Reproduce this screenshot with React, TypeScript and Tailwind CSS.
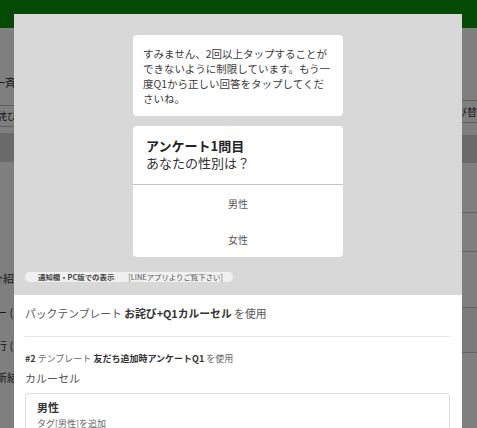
import React from "react";

const bubbleLines = [
  "すみません、2回以上タップすることが",
  "できないように制限しています。もう一",
  "度Q1から正しい回答をタップしてくだ",
  "さいね。",
];

const Background = () => (
  <div className="flex flex-col h-full bg-white text-[#333]">
    <div className="h-[28px] bg-[#0a940a]" />
    <div className="flex flex-1">
      <div className="w-[240px] flex flex-col">
        <div className="mt-[47px] h-[15px] text-[11px] leading-[15px] whitespace-nowrap -ml-[6px]">一斉送信</div>
        <div className="mt-[15px] h-[22px] border-y border-[#bbb] text-[10px] leading-[20px] whitespace-nowrap -ml-[3px]">詫び替え</div>
        <div className="mt-[6px] h-[29px] bg-[#d4d4d4]" />
        <div className="mt-[109px] text-[11px] leading-[15px] whitespace-nowrap -ml-[8px]">介紹</div>
        <div className="mt-[19px] text-[11px] leading-[15px] whitespace-nowrap -ml-[4px]">ー (5</div>
        <div className="mt-[18px] text-[11px] leading-[15px] whitespace-nowrap -ml-[4px]">行 (2</div>
        <div className="mt-[17px] text-[11px] leading-[15px] whitespace-nowrap -ml-[4px]">新結</div>
      </div>
      <div className="flex-1 flex flex-col">
        <div className="mt-[72px] h-[23px] border-y border-[#bbb] flex justify-end">
          <span className="text-[10px] leading-[21px] whitespace-nowrap -mr-[10px]">並び替え</span>
        </div>
        <div className="mt-[12px] h-[28px] bg-[#d4d4d4]" />
        <div className="h-[50px] border-b border-[#c4c4c4]" />
        <div className="h-[39px] border-b border-[#c4c4c4]" />
        <div className="h-[56px] border-b border-[#c4c4c4]" />
        <div className="h-[45px] border-b border-[#c4c4c4] bg-[#f4f4f4]" />
      </div>
    </div>
  </div>
);

const App = () => {
  return (
    <div className="relative w-[477px] h-[428px] overflow-hidden bg-white font-['Noto_Sans_CJK_JP','Noto_Sans',sans-serif]">
      <Background />
      <div className="absolute inset-0 bg-black/50" />

      <div className="absolute left-[14px] top-[14px] w-[448px] bg-white">
        {/* LINE preview */}
        <div className="bg-[#d8d8d8] px-[11px] pt-[21px] pb-[13px]">
          <div className="w-[210px] mx-auto flex flex-col">
            <div className="rounded-[4px] bg-white pl-[10px] pt-[11px] pb-[10px] text-[10.5px] leading-[15px] text-[#3a3a3a]">
              {bubbleLines.map((line) => (
                <div key={line} className="whitespace-nowrap">{line}</div>
              ))}
            </div>

            <div className="mt-[10px] rounded-[4px] bg-white overflow-hidden">
              <div className="pl-[13px] pt-[11px] pb-[13px] text-[13px] leading-[17px]">
                <div className="font-bold text-[#222]">アンケート1問目</div>
                <div className="text-[#333]">あなたの性別は？</div>
              </div>
              <div className="border-t border-[#c4c4c4]">
                <div className="h-[36px] flex items-center justify-center text-[10px] text-[#555]">男性</div>
                <div className="h-[36px] flex items-center justify-center text-[10px] text-[#555]">女性</div>
              </div>
            </div>
          </div>

          <div className="mt-[15px] w-[208px] h-[10px] rounded-full bg-[#f0f0f0] flex items-center pl-[13px] text-[7.4px] leading-[10px] whitespace-nowrap">
            <span className="font-bold text-[#444]">通知欄・PC版での表示</span>
            <span className="ml-[14px] text-[#555]">[LINEアプリよりご覧下さい]</span>
          </div>
        </div>

        {/* settings */}
        <div className="pl-[11px] pr-[12px] pt-[10px]">
          <div className="text-[10.8px] leading-[16px] text-[#555] whitespace-nowrap">
            パックテンプレート <span className="font-bold text-[#333]">お詫び+Q1カルーセル</span> を使用
          </div>
          <div className="mt-[15px] border-t border-[#e6e6e6]" />
          <div className="mt-[15px] text-[9px] leading-[14px] text-[#666] whitespace-nowrap">
            <span className="font-bold text-[#333]">#2</span> テンプレート <span className="font-bold text-[#333]">友だち追加時アンケートQ1</span> を使用
          </div>
          <div className="mt-[4px] text-[11px] leading-[16px] text-[#555]">カルーセル</div>
          <div className="mt-[7px] border border-[#ddd] rounded-[3px] px-[11px] pt-[5px] pb-[10px]">
            <div className="text-[11px] leading-[16px] font-bold text-[#333]">男性</div>
            <div className="mt-[3px] text-[9px] leading-[12px] text-[#666]">タグ[男性]を追加</div>
          </div>
        </div>
      </div>
    </div>
  );
};

export default App;
